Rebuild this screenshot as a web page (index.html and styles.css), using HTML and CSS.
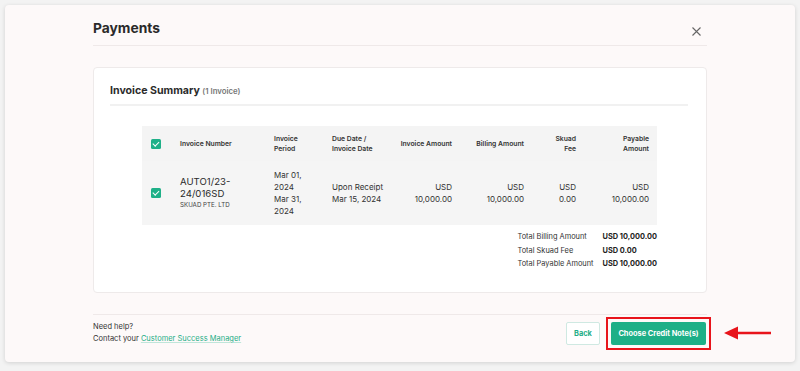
FILE: index.html
```html
<!DOCTYPE html>
<html lang="en">
  <head>
    <meta charset="UTF-8">
    <meta name="viewport" content="width=device-width, initial-scale=1.0">
    <title>Payments</title>
    <link rel="stylesheet" href="styles.css">
  </head>
  <body>
    <div class="ventana">
      <div class="cabecera">
        <h1>Payments</h1>
        <span class="cerrar">
          <svg width="9" height="9" viewBox="0 0 9 9"><path d="M0.5 0.5 L8.5 8.5 M8.5 0.5 L0.5 8.5" stroke="#666" stroke-width="1.1" fill="none"/></svg>
        </span>
      </div>

      <div class="tarjeta">
        <h2>Invoice Summary <span class="cuenta">(1 Invoice)</span></h2>
        <div class="tabla">
          <div class="fila fila-cab">
            <div class="celda c-check"><span class="check"></span></div>
            <div class="celda">Invoice Number</div>
            <div class="celda">Invoice<br>Period</div>
            <div class="celda">Due Date /<br>Invoice Date</div>
            <div class="celda der">Invoice Amount</div>
            <div class="celda der">Billing Amount</div>
            <div class="celda der">Skuad<br>Fee</div>
            <div class="celda der">Payable<br>Amount</div>
          </div>
          <div class="fila fila-cuerpo">
            <div class="celda c-check"><span class="check"></span></div>
            <div class="celda">
              <div class="numero">AUTO1/23-<br>24/016SD</div>
              <div class="empresa">SKUAD PTE. LTD</div>
            </div>
            <div class="celda">Mar 01,<br>2024<br>Mar 31,<br>2024</div>
            <div class="celda">Upon Receipt<br>Mar 15, 2024</div>
            <div class="celda der">USD<br>10,000.00</div>
            <div class="celda der">USD<br>10,000.00</div>
            <div class="celda der">USD<br>0.00</div>
            <div class="celda der">USD<br>10,000.00</div>
          </div>
        </div>
        <div class="totales">
          <span>Total Billing Amount</span><b>USD 10,000.00</b>
          <span>Total Skuad Fee</span><b>USD 0.00</b>
          <span>Total Payable Amount</span><b>USD 10,000.00</b>
        </div>
      </div>

      <div class="pie">
        <div class="ayuda">
          Need help?<br>
          Contact your <a href="#">Customer Success Manager</a>
        </div>
        <div class="botones">
          <button class="btn-volver">Back</button>
          <span class="marcado">
            <button class="btn-elegir">Choose Credit Note(s)</button>
          </span>
          <svg class="flecha" width="48" height="14" viewBox="0 0 48 14"><path d="M13 7 H47" stroke="#e8141b" stroke-width="2.4"/><path d="M0 7 L14 0.5 L14 13.5 Z" fill="#e8141b"/></svg>
        </div>
      </div>
    </div>
  </body>
</html>
```

FILE: styles.css
```css
body {
  margin: 0;
  background-color: #f3f3f3;
  font-family: Inter, "Noto Sans", sans-serif;
  color: #2b2b2b;
}
.ventana {
  margin: 5px;
  height: 357px;
  box-sizing: border-box;
  background-color: #fdf9f9;
  border-radius: 4px;
  box-shadow: 0 1px 4px rgba(0, 0, 0, 0.14);
  padding: 0 88px;
  position: relative;
}
.cabecera {
  display: flex;
  justify-content: space-between;
  align-items: center;
  padding: 14px 0 8px;
  border-bottom: 1px solid #efe9e9;
}
.cabecera h1 { margin: 0; font-size: 13.8px; line-height: 18px; font-weight: 700; color: #2a2a2a; }
.cerrar { display: flex; margin-right: 6px; margin-top: 6px; }

.tarjeta {
  margin-top: 21px;
  background-color: #fff;
  border: 1px solid #eeeaea;
  border-radius: 4px;
  height: 226px;
  box-sizing: border-box;
  padding: 16px 18px 0 16px;
}
.tarjeta h2 {
  margin: 0;
  font-size: 10.6px;
  line-height: 14px;
  font-weight: 700;
  padding-bottom: 6px;
  border-bottom: 2px solid #f1f1f1;
}
.cuenta { font-size: 7.8px; font-weight: 600; color: #777; }

.tabla { margin: 20px 31px 0 32px; background-color: #f4f4f4; }
.fila { display: grid; grid-template-columns: 30px 94px 58px 60px 76px 72px 52px 73px; align-items: center; }
.fila-cab { height: 35px; font-size: 6.8px; font-weight: 600; line-height: 9.5px; color: #333; }
.fila-cuerpo { height: 64px; font-size: 8px; line-height: 12px; color: #333; background-color: #f5f5f5; }
.celda { padding: 0 8px; white-space: nowrap; }
.der { text-align: right; }
.c-check { padding: 0 0 0 9px; display: flex; }
.check {
  width: 10px; height: 10px;
  background-color: #1fb088;
  border-radius: 1.5px;
  position: relative;
}
.check::after {
  content: '';
  position: absolute;
  left: 3.2px; top: 1.2px;
  width: 2.5px; height: 5px;
  border: solid #fff;
  border-width: 0 1.2px 1.2px 0;
  transform: rotate(45deg);
}
.numero { font-size: 9.6px; line-height: 12px; color: #2b2b2b; }
.empresa { font-size: 6.2px; line-height: 10px; color: #444; }

.totales {
  display: grid;
  grid-template-columns: 85px auto;
  justify-content: end;
  margin: 5px 31px 0 0;
  font-size: 7.4px;
  line-height: 13.5px;
  color: #333;
}
.totales b { font-weight: 700; color: #222; }

.pie {
  margin-top: 21px;
  border-top: 1px solid #efe9e9;
  display: flex;
  justify-content: space-between;
  padding-top: 6px;
}
.ayuda { font-size: 7.5px; line-height: 12px; color: #333; }
.ayuda a { color: #1fae87; text-decoration: underline; text-decoration-color: #bfe6da; }
.botones { display: flex; align-items: center; gap: 11px; position: relative; margin-right: 1px; }
button { font-family: inherit; font-size: 7.4px; font-weight: 700; height: 23px; border-radius: 2px; cursor: pointer; }
.btn-volver { width: 34px; padding: 0; background-color: #fff; color: #1fae87; border: 1px solid #cfe9e2; }
.btn-elegir { width: 95px; padding: 0; background-color: #1daf87; color: #fff; border: none; }
.marcado { display: flex; outline: 2px solid #e8141b; outline-offset: 3px; }
.flecha { position: absolute; left: 158px; top: 5px; }
```
